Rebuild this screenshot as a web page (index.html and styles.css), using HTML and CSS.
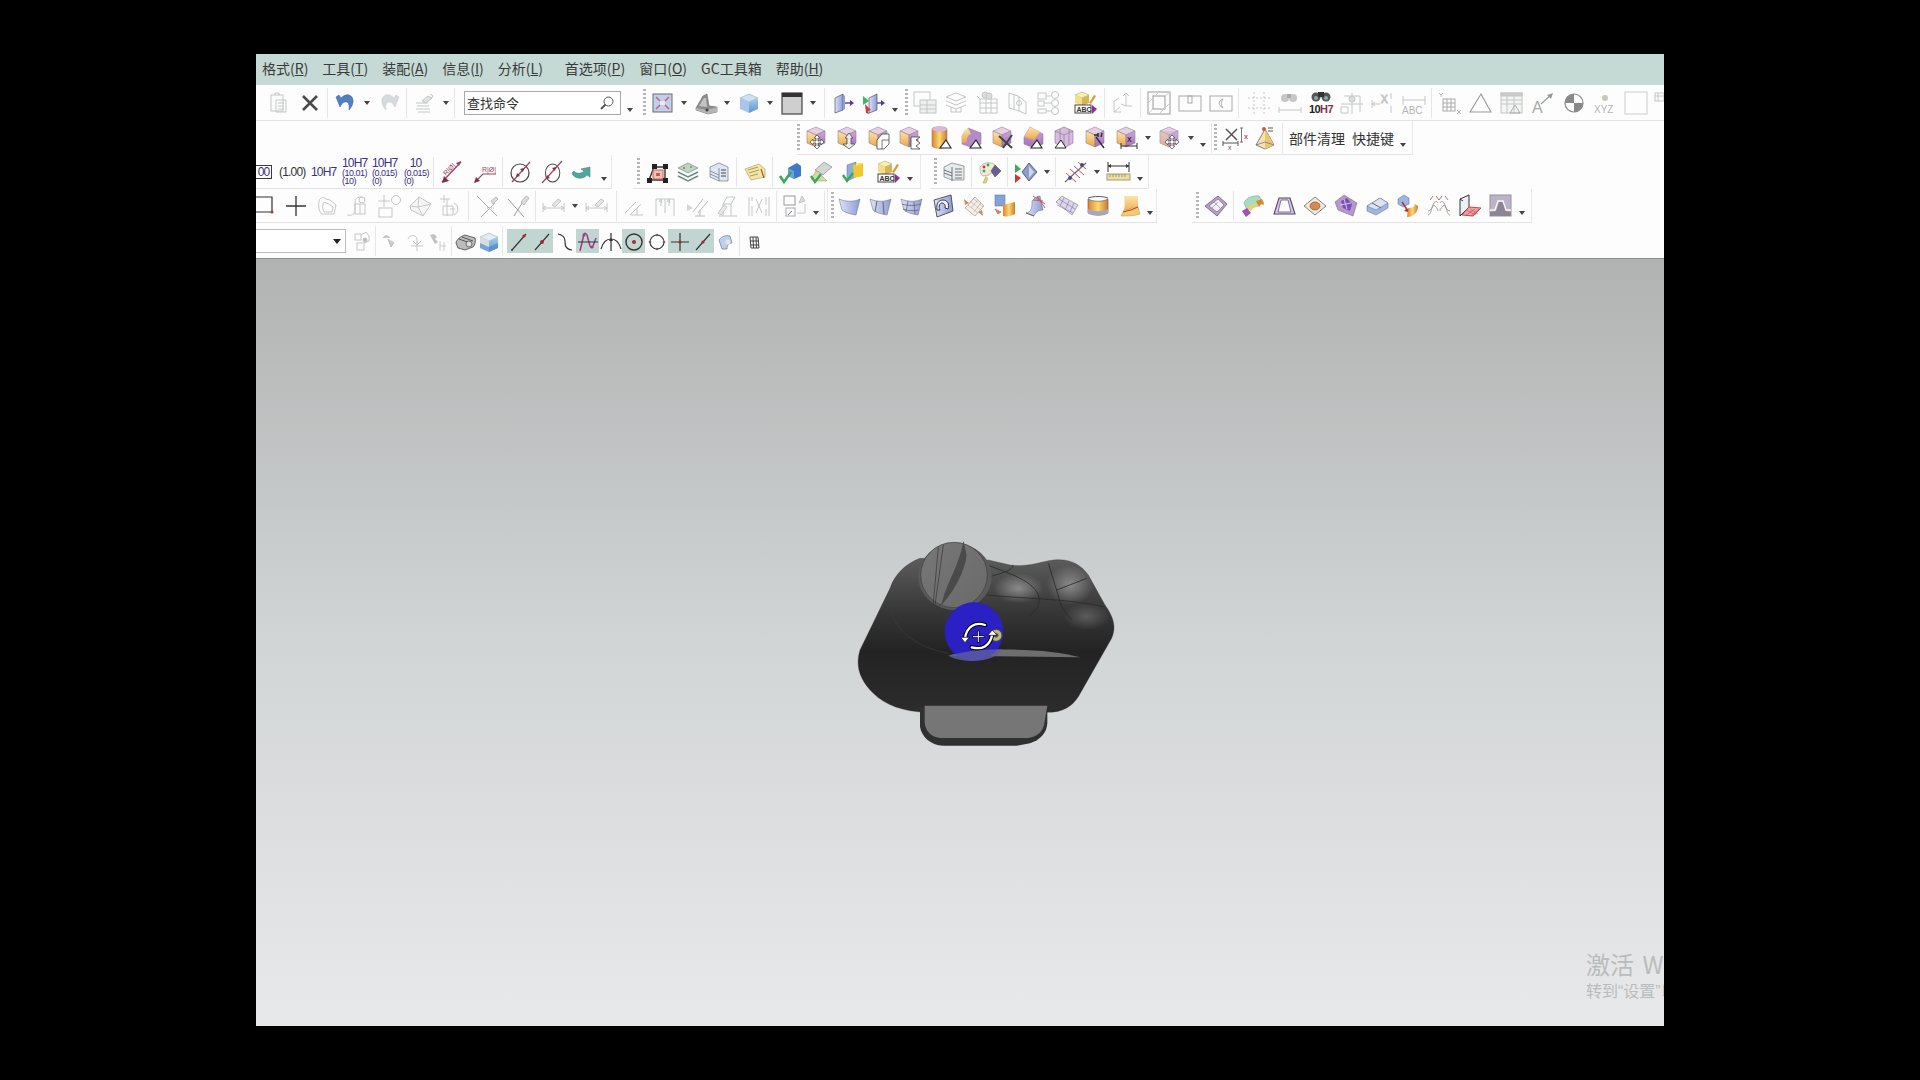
FILE: index.html
```html
<!doctype html>
<html lang="zh-CN">

<head>
	<title>NX</title>
	<meta charset="utf-8">
	<link rel="stylesheet" href="styles.css">
</head>

<body>
	<svg class="defs">
		<defs>
			<linearGradient id="org" x1="0" y1="0" x2="0" y2="1"><stop offset="0" stop-color="#fbe6a8"/><stop offset="1" stop-color="#eda548"/></linearGradient>
			<linearGradient id="pur" x1="0" y1="0" x2="0" y2="1"><stop offset="0" stop-color="#cfa8d8"/><stop offset="1" stop-color="#a070b8"/></linearGradient>
			<linearGradient id="blu" x1="0" y1="0" x2="1" y2="0"><stop offset="0" stop-color="#dde2f6"/><stop offset="1" stop-color="#8c9cd8"/></linearGradient>
			<linearGradient id="sky" x1="0" y1="0" x2="0" y2="1"><stop offset="0" stop-color="#a8cdea"/><stop offset="1" stop-color="#5e96d0"/></linearGradient>
			<linearGradient id="wrm" x1="0" y1="0" x2="1" y2="0"><stop offset="0" stop-color="#e0822a"/><stop offset=".5" stop-color="#fbd873"/><stop offset="1" stop-color="#c97a30"/></linearGradient>
			<linearGradient id="bg1" x1="0" y1="0" x2="0" y2="1"><stop offset="0" stop-color="#5c5c5c"/><stop offset=".35" stop-color="#363636"/><stop offset=".6" stop-color="#232323"/><stop offset="1" stop-color="#2c2c2c"/></linearGradient>
			<radialGradient id="hl"><stop offset="0" stop-color="#a6a6a6"/><stop offset="1" stop-color="#a6a6a6" stop-opacity="0"/></radialGradient>
			<linearGradient id="kn" x1="0" y1="0" x2="1" y2="1"><stop offset="0" stop-color="#777"/><stop offset="1" stop-color="#6a6a6a"/></linearGradient>

			<!-- row 1 -->
			<g id="paste" class="gy"><rect x="4" y="4" width="12" height="16"/><path d="M8 4V2h4v2M9 9h10v12H9zM11 12h6M11 15h6M11 18h6"/></g>
			<path id="cross" d="M5 5l14 14M19 5L5 19" fill="none" stroke="#4a4a4a" stroke-width="2.6"/>
			<path id="undo" d="M2 6l4 10 2.500-4c4.500-2.500 7.500-1 6.500 7 5-5 6-13 0-15-3-1-6 1-8 3L5 4z" fill="#4f80c4" stroke="#3b5f99" stroke-width=".5"/>
			<path id="redo" d="M22 6l-4 10-2.500-4c-4.500-2.500-7.500-1-6.500 7-5-5-6-13 0-15 3-1 6 1 8 3l2-3z" fill="#d5dada" stroke="#c4c8c8" stroke-width=".5"/>
			<g id="doc" class="gy"><path d="M3 12h12M4 15h12M3 18h14M5 21h12"/><path d="M9 10l6-5 4 2-6 5z" fill="#dfe3e3"/><path d="M17 3l3 2-2 3" stroke="#b8c8c0"/></g>
			<g id="fit"><rect x="2" y="3" width="19" height="18" fill="#c3cfe8" stroke="#6a6a78"/><path d="M5 6l4 4M18 6l-4 4M5 18l4-4M18 18l-4-4" stroke="#c25a7a" stroke-width="1.4"/><rect x="9" y="10" width="5" height="4" fill="#e4e9f5"/></g>
			<g id="shape"><path d="M2 17L9 5l4-2 2 12 8 1v5l-9 2-12-4z" fill="#8d8d8d" stroke="#666" stroke-width=".6"/><path d="M5 15l5-8 2 0 1 9z" fill="#c4c4c4"/><path d="M2 17l11 2 10-3v5l-9 2-12-4z" fill="#b5b5b5"/><circle cx="13" cy="19" r="1.500" fill="#444"/></g>
			<g id="cube"><path d="M12 3l9 4-9 4-9-4z" fill="#cfe0f2" stroke="#7f9cc0" stroke-width=".5"/><path d="M3 7l9 4v11l-9-4z" fill="#a9c6e8"/><path d="M21 7v11l-9 4V11z" fill="url(#sky)"/></g>
			<g id="square"><rect x="2" y="2" width="20" height="21" fill="#cfcfcf" stroke="#444" stroke-width="1.2"/><rect x="2" y="2" width="20" height="4" fill="#333"/></g>
			<g id="pan1"><path d="M4 7l8-4v16l-8 3z" fill="url(#blu)" stroke="#556" stroke-width=".7"/><path d="M12 3v16l2-1V5z" fill="#8d9ed8"/><path d="M14 12h6" stroke="#523a9c" stroke-width="1.4"/><path d="M19 9l4 3-4 3z" fill="#523a9c"/></g>
			<g id="pan2"><path d="M7 7l8-4v16l-8 3z" fill="url(#blu)" stroke="#556" stroke-width=".7"/><path d="M1 5l6 5-6 4z" fill="#42b560"/><path d="M3 13l6 6-3 1 1 3-3-1z" fill="#cc3a3a"/><path d="M15 12h5" stroke="#523a9c" stroke-width="1.4"/><path d="M19 9l4 3-4 3z" fill="#523a9c"/></g>
			<g id="gtab" class="gy"><rect x="1" y="1" width="16" height="14"/><rect x="7" y="9" width="16" height="13" fill="#eee"/><path d="M7 14h16M7 18h16M14 9v13"/></g>
			<g id="glay" class="gy"><path d="M12 2l10 4-10 4L2 6z"/><path d="M2 10l10 4 10-4M2 14l10 4 10-4"/><path d="M7 16v5h10v-5M12 18v3"/></g>
			<g id="ggrd" class="gy"><path d="M2 5l3 3h17v14H5V8M5 12h17M5 17h17M11 8v14M16 8v14"/><circle cx="10" cy="4" r="3" fill="#ddd"/><circle cx="14" cy="5" r="3" fill="#ddd"/></g>
			<g id="gfld" class="gy"><path d="M3 2l9 3 8 6v12l-7-3-10-3zM8 4v14M13 5v15"/><circle cx="13" cy="12" r="2.5"/></g>
			<g id="gtree"><g class="gy" stroke-width="1"><rect x="1" y="2" width="8" height="6"/><rect x="1" y="10" width="6" height="5"/><rect x="1" y="18" width="8" height="4"/><circle cx="18" cy="4" r="3.5"/><circle cx="18" cy="12" r="3.5"/><circle cx="18" cy="20" r="3.5"/><path d="M9 5h5M7 12h7M9 20h5"/></g></g>
			<g id="abc"><path d="M8 1l7 3-7 3-7-3z" fill="#fbf0a8" stroke="#998" stroke-width=".5"/><path d="M1 4l7 3v8l-7-3z" fill="#f2de88"/><path d="M15 4v8l-7 3V7z" fill="#d6b45a"/><path d="M15 12l5-8 2 1-5 8z" fill="#d89a3a"/><rect x="1" y="14" width="16" height="8" fill="#fff" stroke="#444"/><text x="2.5" y="21" class="tn">ABC</text><path d="M18 14l5 4-5 5z" fill="#8c2f96"/></g>
			<g id="gaxe" class="gy"><path d="M15 3v12h6M15 15l-5-2M3 21V10l5-3M3 21h7M3 21l6-5"/><path d="M12 5l3-3 3 3"/></g>
			<g id="ghat" class="gy"><rect x="1" y="1" width="22" height="22" stroke="#999"/><rect x="6" y="5" width="12" height="13" fill="#fbfbfb" stroke="#999"/><path d="M1 12L12 1M12 23L23 12M1 23l5-5M18 5l5-4" stroke="#ccc"/></g>
			<g id="grc1" class="gy"><rect x="1" y="5" width="22" height="15" stroke="#aaa"/><rect x="10" y="5" width="4" height="7" stroke="#aaa"/></g>
			<g id="grc2" class="gy"><rect x="1" y="5" width="22" height="15" stroke="#aaa"/><path d="M14 8c-5 2-5 6 0 9-2-3-2-6 0-9z" stroke="#aaa"/></g>
			<g id="gdot" class="gy" stroke-dasharray="2 2"><path d="M1 7h22M1 17h22M7 1v22M17 1v22"/></g>
			<g id="gbin"><circle cx="7" cy="7" r="4" fill="#c7c7c7"/><circle cx="15" cy="7" r="4" fill="#c7c7c7"/><rect x="9" y="3" width="4" height="4" fill="#aaa"/><path d="M1 16v6M23 16v6M1 19h22" class="gy"/></g>
			<g id="b10"><circle cx="7" cy="6" r="4.500" fill="#555"/><circle cx="17" cy="6" r="4.500" fill="#555"/><rect x="9" y="1" width="6" height="5" fill="#333"/><circle cx="7" cy="7" r="2" fill="#8aa"/><circle cx="17" cy="7" r="2" fill="#8aa"/><text x="0" y="22" class="t10">10</text><text x="11" y="22" class="t10 tr">H7</text></g>
			<g id="gpln" class="gy"><path d="M1 13h22M12 2v21M4 5h16v16M1 22h7v-6H1z"/><circle cx="12" cy="8" r="3" fill="#ddd"/></g>
			<g id="gxx" class="gy"><path d="M1 13h8M1 9v8M20 2v6M20 15v7"/><path d="M4 11l-3 2 3 2"/><text x="10" y="12" class="tg">X</text></g>
			<g id="gab" class="gy"><path d="M1 5v9M23 5v9M1 9h22"/><text x="0" y="23" class="tg" stroke="none">ABC</text></g>
			<g id="gyt" class="gy"><rect x="5" y="8" width="12" height="12" stroke="#aaa"/><path d="M5 12h12M5 16h12M9 8v12M13 8v12" stroke="#aaa"/><path d="M1 2l2 2 2-2M3 4v2M19 19l4 4M23 19l-4 4" stroke="#bbb"/></g>
			<path id="tri" d="M12 3l10 18H1z" fill="none" stroke="#9a9a9a" stroke-width="1.1"/>
			<g id="gtb2" class="gy"><rect x="1" y="2" width="21" height="20" fill="#f4f4f4"/><rect x="1" y="2" width="21" height="3" fill="#ccc"/><path d="M1 9h21M1 13h21M7 5v17M14 5v17"/><path d="M15 14l5 8H10z" stroke="#aaa"/></g>
			<g id="gaar"><text x="1" y="22" class="tg tl">A</text><path d="M10 13l10-9" stroke="#999" stroke-width="1.2"/><path d="M22 2l-6 2 4 4z" fill="#999"/></g>
			<g id="quad"><circle cx="12" cy="12" r="9" fill="#fff" stroke="#888" stroke-width="1.2"/><path d="M12 3a9 9 0 0 0-9 9h9zM12 12h9a9 9 0 0 1-9 9z" fill="#888"/></g>
			<g id="xyz"><circle cx="12" cy="7" r="3" fill="#c9c9b8"/><text x="1" y="22" class="tg">XYZ</text></g>
			<rect id="blank" x="1" y="1" width="22" height="22" fill="#fdfdfd" stroke="#ccc"/>
			<g id="gcut" class="gy"><rect x="0" y="2" width="9" height="8"/><path d="M0 5h9M3 2v8"/></g>

			<!-- row 2, the cube family -->
			<g id="cb"><path d="M11 1l9 4-9 4-9-4z" fill="#e7cfe4" stroke="#84708c" stroke-width=".5"/><path d="M2 5l9 4v12l-9-4z" fill="url(#org)" stroke="#84708c" stroke-width=".5"/><path d="M20 5v12l-9 4V9z" fill="url(#pur)" stroke="#84708c" stroke-width=".5"/></g>
			<path id="wmove" d="M15 9l3 3h-2v3h3v-2l3 3-3 3v-2h-3v3h2l-3 3-3-3h2v-3h-3v2l-3-3 3-3v2h3v-3h-2z" fill="#fff" stroke="#444" stroke-width=".7"/>
			<g id="c1"><use href="#cb"/><use href="#wmove" x="-3"/></g>
			<g id="c2"><use href="#cb"/><path d="M13 7l4 5h-2v6h4l-6 5-6-5h4v-6H9z" fill="#e9e9e9" stroke="#444" stroke-width=".7"/></g>
			<g id="c3"><use href="#cb"/><path d="M10 14l5-6h7v10l-5 5h-7z" fill="#fff" stroke="#444" stroke-width=".8"/><path d="M15 14v9M15 14h7" stroke="#444" stroke-width=".7"/></g>
			<g id="c4"><use href="#cb"/><path d="M13 11h9l-4 3 4 3-4 3 4 3h-9z" fill="#fff" stroke="#444" stroke-width=".8"/></g>
			<g id="ctri"><path d="M14 14l5 8H8z" fill="#fff" stroke="#222" stroke-width="1.1"/></g>
			<g id="c5"><path d="M3 3c0-3 15-3 15 0v17c0 3-15 3-15 0z" fill="url(#wrm)" stroke="#84708c" stroke-width=".5"/><ellipse cx="10.500" cy="3" rx="7.500" ry="2.500" fill="#d8b8dc"/><use href="#ctri" x="3"/></g>
			<g id="c6"><path d="M2 10l6-8 13 5v11l-8 4-11-4z" fill="#b58ac8" stroke="#84708c" stroke-width=".5"/><path d="M2 10c1-4 3-7 6-8l3 6c-3 1-5 4-4 8l-5 1z" fill="url(#org)"/><use href="#ctri" x="2"/></g>
			<g id="c7"><use href="#cb"/><path d="M8 10l13 12M21 9l-9 13" stroke="#444" stroke-width="2"/></g>
			<g id="c8"><path d="M8 1l13 7v10l-9 4-10-4v-7z" fill="url(#pur)" stroke="#84708c" stroke-width=".5"/><path d="M2 11l6-10 10 5-6 8z" fill="url(#org)"/><use href="#ctri" x="1"/></g>
			<g id="c9"><path d="M11 1l9 4v12l-9 5-9-5V5z" fill="#d7bbe0" stroke="#84708c" stroke-width=".6"/><path d="M2 5l9 4 9-4M11 9v13M7 3v16M16 3v16" stroke="#84708c" stroke-width=".6" fill="none"/><path d="M8 14l5 8H2z" fill="#fff" stroke="#222"/></g>
			<g id="c10"><use href="#cb"/><path d="M12 11l8 11M14 7v4M10 9h4M18 7l-1 4" stroke="#333" stroke-width="1.5"/></g>
			<g id="c11"><use href="#cb"/><path d="M6 20h16M6 17v6M22 17v6" stroke="#333"/><text x="12" y="16" class="tn">X</text></g>
			<g id="c12"><use href="#cb"/><path d="M11 5l9 0v12l-9 4-9-4V5z" fill="#cdb0d8" opacity=".5"/><use href="#wmove" x="-1"/></g>
			<g id="xi"><path d="M5 3l11 11M16 3L5 14" stroke="#555" stroke-width="1.500"/><path d="M19 2h3M20.500 2v14M19 16h3" stroke="#777"/><text x="23" y="13" class="tn ty">x</text><path d="M2 17h15M2 15v5M17 15v5" stroke="#555"/><text x="7" y="24" class="tp">x</text></g>
			<g id="pyr"><path d="M12 3l9 16-9 4-9-4z" fill="#f5e4a8" stroke="#6a5a90" stroke-width=".8"/><path d="M12 3v20l9-4z" fill="#e8c86a"/><path d="M3 19l9-3 9 3" stroke="#8a6ab0" stroke-width=".8" fill="none"/><circle cx="11" cy="3" r="2" fill="#cc5a3a"/><path d="M15 2h5M15 5h5" stroke="#555"/></g>

			<!-- row 3 -->
			<g id="dm1"><path d="M2 22L21 2" stroke="#a04060" stroke-width="1.2"/><path d="M2 23l2-7 5 5z" fill="#80304a"/><path d="M21 1l-5 2 3 3z" fill="#a04060"/><text class="tp" x="0" y="0" transform="translate(6 16) rotate(-45)">R|Ø|</text></g>
			<g id="dm2"><path d="M2 22l8-8h13" stroke="#a04060" stroke-width="1.2" fill="none"/><path d="M1 23l2-6 4 4z" fill="#80304a"/><text class="tp" x="9" y="12">R|Ø|</text></g>
			<g id="dm3"><circle cx="11" cy="13" r="9" fill="none" stroke="#444" stroke-width="1.2"/><path d="M3 22L21 2" stroke="#a04060" stroke-width="1.2"/><path d="M7 17l4-1-3-3zM15 8l-4 1 3 3z" fill="#80304a"/></g>
			<g id="dm4"><path d="M12 4c5 0 9 4 9 9s-4 9-9 9-9-4-9-9 4-9 9-9" fill="none" stroke="#444" stroke-width="1.2" transform="matrix(.8 0 0 1 3 0)"/><path d="M2 23L22 1" stroke="#a04060" stroke-width="1.2"/><path d="M6 19l4-1-3-3zM16 7l-4 1 3 3z" fill="#80304a"/></g>
			<path id="ret" d="M1 13c2 6 11 7 15 2l3 2V7l-9 2 3 2c-3 3-8 3-10 0z" fill="#4fa69a" stroke="#37807a" stroke-width=".5"/>
			<g id="node"><path d="M4 20L9 7h11v13z" fill="none" stroke="#333" stroke-width="1.4"/><rect x="8" y="10" width="10" height="9" fill="#f3c3b4" stroke="#c65a50"/><rect x="11" y="13" width="4" height="3" fill="#c65a50"/><rect x="7" y="4" width="5" height="5" fill="#222"/><rect x="18" y="4" width="5" height="5" fill="#222"/><rect x="2" y="18" width="5" height="5" fill="#222"/><rect x="18" y="18" width="5" height="5" fill="#222"/></g>
			<g id="stk"><path d="M12 3l10 5-10 5L2 8z" fill="#bcd6c4" stroke="#777" stroke-width=".6"/><path d="M2 12l10 5 10-5M2 16l10 5 10-5" fill="none" stroke="#6a8a80" stroke-width="1.4"/><circle cx="8" cy="8" r="1" fill="#c55"/><circle cx="15" cy="7" r="1" fill="#5a5"/></g>
			<g id="stk2"><path d="M3 7l9-4 9 4v14H12L3 17z" fill="#dfe8f2" stroke="#778" stroke-width=".7"/><path d="M3 11l9 4M3 14l9 4M12 8v13" stroke="#779" fill="none" stroke-width=".8"/><path d="M14 10h5M14 13h5M14 16h5" stroke="#445" stroke-width="1.2"/></g>
			<g id="tag"><path d="M2 9l14-5 6 5v8L8 20z" fill="#f2e6a6" stroke="#b8a060" stroke-width=".7"/><path d="M5 10l10-3M6 13l10-3M7 16l8-2" stroke="#b09a60"/><path d="M18 9l3 9" stroke="#a05a40" stroke-width="1.2"/></g>
			<g id="chk1"><path d="M9 8l9-5 4 3v10l-7 3-6-3z" fill="#3e78c8"/><path d="M9 8l6 3v8l-6-3z" fill="#6da0e0"/><path d="M1 16l4 6 7-10" fill="none" stroke="#3aa858" stroke-width="2.6"/></g>
			<g id="ham"><path d="M5 10l9-8 8 5-7 6-2 2-4-3z" fill="#d2d8d2" stroke="#666" stroke-width=".5"/><path d="M1 19l5-8 4 3 7 7H7z" fill="#d2d8a6" stroke="#9a9a50" stroke-width=".5"/><path d="M1 16l4 6 6-8" fill="none" stroke="#3aa858" stroke-width="2.4"/></g>
			<g id="chk2"><path d="M6 5l9-3v15l-9 4z" fill="#8cb0dc" stroke="#556" stroke-width=".4"/><path d="M12 5l10-2v13l-9 2z" fill="#f2c82e"/><path d="M15 3h7l-7 3z" fill="#fae37a"/><path d="M2 15l4 6 6-8" fill="none" stroke="#3aa858" stroke-width="2.4"/></g>
			<g id="stk3"><path d="M2 7l8-4 12 3v14H10L2 17z" fill="#e5ece9" stroke="#778" stroke-width=".7"/><path d="M2 10l8 3M2 13l8 3M10 7v14M13 9h7M13 12h7M13 15h7M13 18h7" stroke="#667" fill="none" stroke-width=".9"/></g>
			<g id="pal"><path d="M2 9c0-5 6-7 11-6s7 5 4 8c-2 3-5 1-6 4l-6 1C3 15 2 12 2 9z" fill="#f1ecc6" stroke="#999" stroke-width=".6"/><circle cx="6" cy="7" r="1.4" fill="#d26"/><circle cx="10" cy="5" r="1.400" fill="#2a7"/><circle cx="6" cy="11" r="1.400" fill="#39c"/><path d="M8 16l-3 7h3l2-5" fill="#e8cf6e" stroke="#998" stroke-width=".5"/><path d="M17 5l6 6-6 6-4-6z" fill="#6a5aa0" stroke="#444" stroke-width=".5"/></g>
			<g id="dia"><path d="M1 4l6 5-6 4z" fill="#42a860"/><path d="M1 14l6 4-6 5z" fill="#c83a3a"/><path d="M15 3l8 9-8 9-7-9z" fill="#8c9ccc" stroke="#445" stroke-width=".8"/><path d="M15 6l5 6-5 6z" fill="#d0d6ea"/></g>
			<g id="hatch"><path d="M1 22L22 3" stroke="#666" stroke-width="1.1"/><path d="M2 13l10 9M6 9l10 9M10 6l10 9M14 2l8 7" stroke="#c0565a" stroke-width="1"/><circle cx="18" cy="5" r="2" fill="#4a4a90"/><circle cx="6" cy="18" r="2" fill="#4a4a90"/></g>
			<g id="rule"><path d="M1 2v10M22 2v10M1 6h21" stroke="#333"/><path d="M4 4L1 6l3 2zM19 4l3 2-3 2z" fill="#333"/><rect x="0" y="14" width="23" height="6" fill="#e8dfa0" stroke="#a8a070"/><path d="M3 14v3M6 14v3M9 14v3M12 14v3M15 14v3M18 14v3" stroke="#888" stroke-width=".8"/></g>

			<!-- row 4, sketch tools -->
			<g id="rect"><path d="M-2 3h18v15H-2" fill="none" stroke="#333" stroke-width="1.2"/><circle cx="16" cy="18" r="1.500" fill="#b0303a"/></g>
			<path id="plus" d="M12 2v20M2 12h20" stroke="#333" stroke-width="1.300"/>
			<path id="sk1" class="gy" d="M4 8c0-4 4-6 7-3l4 1 6 5-2 9H7c-3-2-4-8-3-12zM8 10c1-2 2-2 3-1l3 1 4 3-1 5H9c-1-2-2-5-1-8z"/>
			<g id="sk2" class="gy"><path d="M1 21c5 1 8-1 8-4V8c0-4 3-5 7-5"/><rect x="9" y="10" width="10" height="10"/><path d="M14 10v10"/><circle cx="16" cy="6" r="3"/></g>
			<g id="sk3" class="gy"><path d="M7 1v12M1 7h12"/><circle cx="19" cy="6" r="4.500"/><rect x="2" y="14" width="13" height="9"/></g>
			<g id="sk4" class="gy"><path d="M2 12l9-9 12 7-8 12-12-6zM11 3l-1 10 5 9M2 12l8 1 13-3" fill="#f6f6f6"/></g>
			<g id="sk5" class="gy"><path d="M1 5h10M5 1v8M8 5v17M4 12h10v9H4zM15 9c5 2 5 10 0 12"/><path d="M11 15h5"/></g>
			<g id="sk6"><path d="M2 2l20 20M20 9L6 23" stroke="#aaa" fill="none"/><path d="M12 14h8" stroke="#bbb" stroke-dasharray="1 1"/><path d="M16 7l5-4 2 2-5 5z" fill="#ddd" stroke="#bbb"/></g>
			<g id="sk7"><path d="M2 5l16 18M20 3L8 22" stroke="#999" fill="none"/><path d="M15 8l5-6 3 2-5 7z" fill="#ddd" stroke="#bbb"/></g>
			<g id="sk8" class="gy"><path d="M1 9v9M22 9v9M1 14h21"/><path d="M10 11l6-6 3 2-6 6z" fill="#e4e4e4"/><path d="M4 12l-3 2 3 2M19 12l3 2-3 2"/></g>
			<g id="sk9" class="gy"><path d="M2 19L13 8M7 21L18 10M8 21h12M14 21v-7"/></g>
			<g id="sk10" class="gy"><path d="M2 22V5h18v17M7 5v7M15 5v7M8 9l-1-4 -2 3M16 9l-1-4-2 3M11 5v14"/></g>
			<g id="sk11"><path d="M2 10l6 4-6 3z" fill="#d6d6d6"/><path d="M8 18L18 5M13 19L23 7M10 22h10M15 22v-6" stroke="#bbb" fill="none"/></g>
			<g id="sk12" class="gy"><path d="M3 22h18M7 22V10h8v12M15 10l4-7M7 10l4-7h8"/><path d="M2 19l6-8 3 2-6 8z" fill="#e8e8e8"/></g>
			<g id="sk13" class="gy"><path d="M2 3v19M22 3v19M5 3v4M5 12v10M19 3v8M19 15v7M9 5l6 14M15 5L9 19"/></g>
			<g id="sk14" class="gy"><rect x="1" y="2" width="11" height="9" stroke="#999"/><rect x="3" y="14" width="9" height="8" stroke="#aaa"/><path d="M14 19h8v-9"/><path d="M19 2l3 5-6 2z" fill="#ddd"/><path d="M5 21l4-4" stroke="#77a"/></g>

			<g id="s1"><path d="M1 5c7 3 15 3 21 0l-4 16c-6-1-10-2-14-5z" fill="url(#blu)" stroke="#667" stroke-width=".5"/></g>
			<g id="s2"><use href="#s1"/><path d="M8 7l-2 11M14 8l1 12" stroke="#667"/></g>
			<g id="s3"><use href="#s1"/><path d="M8 7l-2 11M14 8l1 12M2 10c6 2 13 2 19 0M3 15c5 2 10 2 16 1" stroke="#667" fill="none" stroke-width=".8"/></g>
			<g id="s4"><path d="M3 6l17-5 2 16-16 6z" fill="url(#blu)" stroke="#445" stroke-width=".9"/><path d="M6 16c-1-7 2-10 6-10s7 4 5 9l-3-1c1-3-1-5-3-5s-4 3-2 7z" fill="#f4f4fb" stroke="#334"/></g>
			<g id="s5"><path d="M3 14L13 3l9 9-9 10z" fill="#f3eee8" stroke="#a88" stroke-width=".6"/><path d="M6 11l10 8M9 8l10 8M12 5l9 8M13 3l-7 8M16 6l-7 8M19 9l-7 9" stroke="#b99" stroke-width=".5"/><path d="M2 5l5 4-4 2zM21 22l-5-4 4-2z" fill="#d48a52"/></g>
			<g id="s6"><rect x="2" y="1" width="10" height="11" fill="#7ea6dc" stroke="#667" stroke-width=".5"/><path d="M10 11l12-3v12c-4 2-8 3-12 2z" fill="url(#wrm)"/><path d="M2 15l6 3-3 2zM10 9H7" fill="#c86" stroke="#c86"/></g>
			<g id="s7"><path d="M2 19c6-1 6-6 6-12 2-3 6-5 8-5l3 14c-5 0-8 3-9 6z" fill="url(#blu)" stroke="#667" stroke-width=".5"/><path d="M9 2l12 8M13 2l8 12M9 6l10 1" stroke="#c55a60"/><path d="M2 19l8 3" stroke="#667"/></g>
			<g id="s8"><path d="M1 8l6-6 16 9-6 10z" fill="#dcd6ee" stroke="#887" stroke-width=".6"/><path d="M4 5l16 10M2 11l16 8M9 4L5 12M14 7l-4 9M19 9l-4 9" stroke="#8c7cb0" stroke-width=".7"/></g>
			<g id="s9"><path d="M2 5c6 3 14 3 20 0v14c-6 3-14 3-20 0z" fill="url(#wrm)" stroke="#556" stroke-width=".6"/><path d="M2 15c6 3 14 3 20 0v4c-6 3-14 3-20 0z" fill="#a8a8bc"/><path d="M2 4c6-2 14-2 20 0" stroke="#556" fill="none"/></g>
			<g id="s10"><path d="M7 2h14v12c-2 0-4 1-6 3l-9 2c2-4 2-9 1-17z" fill="url(#org)"/><path d="M4 22l3-6c3 0 6-1 8-2 2 0 4 0 6-1l2 7c-6 2-13 2-19 2z" fill="#f0cc70" stroke="#b86" stroke-width=".5"/><path d="M6 18l8-2 7-3" stroke="#c43a3a" fill="none"/></g>

			<g id="t1"><path d="M1 12l13-10 9 8-10 12z" fill="#b8a0c4" stroke="#6a5a80" stroke-width=".8"/><path d="M5 12l9-7 6 6-7 7z" fill="#f4f2f6" stroke="#6a5a80" stroke-width=".6"/><path d="M10 8l6 6M14 8l-6 6" stroke="#8a7a9c" stroke-width=".6"/></g>
			<g id="t2"><path d="M3 9c2-5 9-8 15-7l5 7-8 3c-5 0-8 1-9 4z" fill="#a8dcc0" stroke="#6a9a80" stroke-width=".5"/><path d="M6 15c0-3 4-5 9-5l3 3c-5 0-7 2-8 4z" fill="#e0d47a"/><path d="M1 17l5-3 4 5-5 4z" fill="#a050b0"/><path d="M15 7l6-2 2 6-3-1-2 3z" fill="#d8882a"/></g>
			<g id="t3"><path d="M7 4h11l5 16H2z" fill="#d4c8e6" stroke="#55456a" stroke-width="1.1"/><path d="M9 6l-3 12h13l-3-12z" fill="#fbfbfd" stroke="#55456a" stroke-width=".7"/></g>
			<g id="t4"><path d="M1 12l11-9 11 9-11 9z" fill="#f0ecdc" stroke="#666" stroke-width=".8"/><ellipse cx="12" cy="12" rx="5" ry="4" fill="#d88a4a" stroke="#74405a" stroke-width=".6"/></g>
			<g id="t5"><path d="M1 8l9-7 13 8-4 13-15-6z" fill="#b898cc" stroke="#665" stroke-width=".5"/><path d="M7 7l6-3 5 6-2 7-7-3z" fill="#7a50b8"/><path d="M10 5l3 10M6 11l11-2" stroke="#d8c8ec"/></g>
			<g id="t6"><path d="M2 12l13-8 8 5v5l-12 7-9-4z" fill="#9cb8e6" stroke="#667" stroke-width=".5"/><path d="M2 12l9 4 12-7-8-5z" fill="#dde2f4" stroke="#667" stroke-width=".5"/><path d="M7 9l9 5" stroke="#667"/></g>
			<g id="t7"><path d="M2 5l6-4 5 3v6l-6 3-5-3z" fill="#9cb4e6" stroke="#667" stroke-width=".5"/><path d="M12 14c5 0 6-1 7-4l3 2c0 6-4 11-11 11z" fill="url(#wrm)"/><path d="M6 8l6 9" stroke="#b83030" stroke-width="1.5"/><path d="M12 18l-4-1 3-3z" fill="#b83030"/></g>
			<g id="t8"><path d="M1 21c3 0 3-7 6-12 1-2 3-2 4 0M13 9c1-2 3-2 4 0 3 5 3 12 6 12M1 17c3 0 4-4 6-6 2 3 4 3 4 6M13 17c0-3 2-3 4-6 2 2 3 6 6 6" fill="none" stroke="#9a8a78" stroke-width=".8"/><path d="M6 2l-3 4M9 2l3 4M15 2l-3 4M18 2l3 4" stroke="#b34a4a" stroke-width=".8"/></g>
			<g id="t9"><path d="M2 5l9-4v12l-9 9z" fill="#eef0f8" stroke="#333" stroke-width="1"/><path d="M11 13l12 1-8 8-11-1z" fill="#eaa4aa" stroke="#c44"/><path d="M8 16l10 5M12 15l8 5M17 15l-9 6M21 15l-8 7" stroke="#c44" stroke-width=".6"/><path d="M2 5l3 2" stroke="#333"/></g>
			<g id="t10"><rect x="1" y="1" width="21" height="21" fill="#bdb2c6" stroke="#99909e"/><path d="M1 18l6-1 3-9h4l3 9 5 1v4H1z" fill="#8d8496"/><path d="M1 16h5l3-9h5l3 9h5" fill="none" stroke="#f6f6f8" stroke-width="1.400"/></g>

			<!-- row 5 -->
			<g id="q1" class="gy"><rect x="5" y="4" width="6" height="6"/><path d="M11 5l5-3 3 4v5l-5 2"/><rect x="7" y="13" width="7" height="7"/><circle cx="15" cy="10" r="2" fill="#bbb"/></g>
			<g id="q2"><path d="M3 8c2-3 5-3 7 0" stroke="#bbb" fill="#ccc"/><path d="M8 9l3 8 3-5" fill="#c8d0c8" stroke="#bbb"/></g>
			<path id="q3" class="gy" d="M5 9c1-4 8-5 9 0v4M10 11l4 4 4-4M14 12v9M8 16h12"/>
			<g id="q4"><path d="M4 5l4-1 3 3-2 2 3 3-3 2z" fill="#c0c0c0"/><path d="M14 11v10M18 12v9M14 16h6" stroke="#ccc"/></g>
			<g id="sol"><path d="M2 13c0-3 5-7 9-8l10 3c1 3 0 7-2 9l-8 3-7-2z" fill="#bcbcbc" stroke="#444" stroke-width=".8"/><path d="M5 9l11 4M8 7l11 4" stroke="#555"/><circle cx="15" cy="14" r="3" fill="#ddd" stroke="#444" stroke-width=".7"/></g>
			<g id="cub2"><path d="M12 3l9 4-9 4-9-4z" fill="#e4ecf4" stroke="#8aa" stroke-width=".5"/><path d="M3 7l9 4v11l-9-4z" fill="#d8dde0"/><path d="M21 7v11l-9 4V11z" fill="url(#sky)"/><path d="M3 13l9 4 9-4v5l-9 4-9-4z" fill="#4e8ccc" opacity=".7"/></g>
			<g id="d1"><path d="M5 20L19 4" stroke="#333" stroke-width="1.200"/><circle cx="17" cy="6" r="1.600" fill="#a82a3a"/><circle cx="5" cy="20" r="1" fill="#333"/></g>
			<g id="d2"><path d="M5 20L19 4" stroke="#333" stroke-width="1.200"/><circle cx="12" cy="12" r="2" fill="#a82a3a"/></g>
			<path id="d3" d="M5 4c5 1 7 3 7 7s0 8 7 9" fill="none" stroke="#333" stroke-width="1.200"/>
			<g id="d4"><path d="M4 21L8 4c1-1 2-1 3 1l3 11c1 2 2 2 3 0l3-8" fill="none" stroke="#a03a88" stroke-width="1.500"/><circle cx="8" cy="5" r="1.600" fill="#a03a88"/><circle cx="16" cy="17" r="1.600" fill="#a03a88"/><path d="M2 12h20" stroke="#333" stroke-width="1"/></g>
			<g id="d5"><path d="M2 19C4 12 8 9 12 9s8 3 10 10M12 3v18" fill="none" stroke="#333" stroke-width="1.200"/><path d="M12 8l-2 3h4z" fill="#333"/></g>
			<g id="d6"><circle cx="12" cy="12" r="8" fill="none" stroke="#333" stroke-width="1.400"/><circle cx="12" cy="12" r="2" fill="#a82a3a"/></g>
			<g id="d7"><circle cx="12" cy="12" r="7" fill="none" stroke="#333" stroke-width="1.100"/><circle cx="12" cy="5" r="1.300" fill="#666"/><circle cx="12" cy="19" r="1.300" fill="#666"/><circle cx="5" cy="12" r="1.300" fill="#666"/><circle cx="19" cy="12" r="1.300" fill="#666"/></g>
			<g id="d8"><path d="M12 3v18M3 12h18" stroke="#333" stroke-width="1.200"/><circle cx="12" cy="12" r="1.500" fill="#a82a3a"/></g>
			<g id="d9"><path d="M5 20L19 4" stroke="#333" stroke-width="1.200"/><circle cx="12" cy="12" r="1.600" fill="#a82a3a"/></g>
			<g id="d10"><path d="M5 10c3-4 7-5 11-4l2 7c-3 0-5 2-5 6H8z" fill="#bcd0ea" stroke="#667" stroke-width=".6"/><circle cx="14" cy="12" r="2.500" fill="#dce4ef"/></g>
			<g id="d11"><path d="M8 7h8l1 11H9zM8 11h9M8 15h9M11 7l.5 11M14 7l.5 11" fill="none" stroke="#444" stroke-width="1"/></g>
		</defs>
	</svg>

	<div class="win">
		<div class="menu">
			<span class="mi">格式(<u>R</u>)</span>
			<span class="mi">工具(<u>T</u>)</span>
			<span class="mi">装配(<u>A</u>)</span>
			<span class="mi">信息(<u>I</u>)</span>
			<span class="mi">分析(<u>L</u>)</span>
			<span class="mi wide">首选项(<u>P</u>)</span>
			<span class="mi">窗口(<u>O</u>)</span>
			<span class="mi">GC工具箱</span>
			<span class="mi">帮助(<u>H</u>)</span>
		</div>

		<div class="tb r1">
			<i class="w7"></i>
			<svg class="c"><use href="#paste"/></svg><svg class="c"><use href="#cross"/></svg><i class="sep"></i>
			<svg class="c"><use href="#undo"/></svg><i class="dd"></i><svg class="c"><use href="#redo"/></svg><i class="sep"></i>
			<svg class="c"><use href="#doc"/></svg><i class="dd"></i><i class="sep"></i><i class="w7"></i>
			<div class="search"><span>查找命令</span><svg class="mag" width="14" height="14"><circle cx="8.500" cy="5.500" r="4.500" fill="#fff" stroke="#555"/><path d="M5.500 8.500L1 13" stroke="#555" stroke-width="2"/></svg></div>
			<i class="w3"></i><i class="dd low"></i><i class="w3"></i><i class="grip"></i>
			<svg class="c"><use href="#fit"/></svg><i class="dd"></i><svg class="c"><use href="#shape"/></svg><i class="dd"></i><svg class="c"><use href="#cube"/></svg><i class="dd"></i><svg class="c"><use href="#square"/></svg><i class="dd"></i><i class="w3"></i><i class="sep"></i>
			<svg class="c"><use href="#pan1"/></svg><svg class="c"><use href="#pan2"/></svg><i class="dd low"></i><i class="grip"></i>
			<svg class="c"><use href="#gtab"/></svg><svg class="c"><use href="#glay"/></svg><svg class="c"><use href="#ggrd"/></svg><svg class="c"><use href="#gfld"/></svg><svg class="c"><use href="#gtree"/></svg><i class="w6"></i><svg class="c"><use href="#abc"/></svg><i class="w1"></i><i class="sep"></i>
			<svg class="c"><use href="#gaxe"/></svg><i class="sep"></i>
			<svg class="c"><use href="#ghat"/></svg><svg class="c"><use href="#grc1"/></svg><svg class="c"><use href="#grc2"/></svg><i class="sep"></i><i class="w2"></i>
			<svg class="c"><use href="#gdot"/></svg><svg class="c"><use href="#gbin"/></svg><svg class="c"><use href="#b10"/></svg><svg class="c"><use href="#gpln"/></svg><svg class="c"><use href="#gxx"/></svg><svg class="c"><use href="#gab"/></svg><i class="sep"></i>
			<svg class="c"><use href="#gyt"/></svg><svg class="c"><use href="#tri"/></svg><svg class="c"><use href="#gtb2"/></svg><svg class="c"><use href="#gaar"/></svg><svg class="c"><use href="#quad"/></svg><svg class="c"><use href="#xyz"/></svg><svg class="c"><use href="#blank"/></svg><svg class="c"><use href="#gcut"/></svg>
		</div>

		<div class="tb r2">
			<div class="grp">
				<i class="grip flush"></i><i class="w1"></i>
				<svg class="c"><use href="#c1"/></svg><svg class="c"><use href="#c2"/></svg><svg class="c"><use href="#c3"/></svg><svg class="c"><use href="#c4"/></svg><svg class="c"><use href="#c5"/></svg><svg class="c"><use href="#c6"/></svg><svg class="c"><use href="#c7"/></svg><svg class="c"><use href="#c8"/></svg><svg class="c"><use href="#c9"/></svg><svg class="c"><use href="#c10"/></svg><svg class="c"><use href="#c11"/></svg><i class="dd"></i><svg class="c"><use href="#c12"/></svg><i class="dd"></i><i class="dd low"></i><i class="sep"></i><i class="grip flush"></i>
				<svg class="c"><use href="#xi"/></svg><i class="w1"></i><svg class="c"><use href="#pyr"/></svg><i class="sep"></i><i class="w4"></i>
				<span class="lbl">部件清理</span><span class="lbl sec">快捷键</span><i class="w3"></i><i class="dd low"></i><i class="w3"></i>
			</div>
		</div>

		<div class="tb r3">
			<div class="grp">
				<span class="dim boxed">00</span><i class="w7"></i>
				<span class="dim w24">(1.00)</span><i class="w8"></i>
				<span class="dim w22 navy">10H7</span><i class="w9"></i>
				<span class="stack w24"><b>10H7</b><small>(10.01)<br>(10)</small></span><i class="w6"></i>
				<span class="stack w24"><b>10H7</b><small>(0.015)<br>(0)</small></span><i class="w8"></i>
				<span class="stack w23"><b>10</b><small>(0.015)<br>(0)</small></span><i class="w4"></i><i class="sep"></i>
				<svg class="c"><use href="#dm1"/></svg><i class="w2"></i><svg class="c"><use href="#dm2"/></svg><i class="sep"></i>
				<svg class="c"><use href="#dm3"/></svg><svg class="c"><use href="#dm4"/></svg><svg class="c"><use href="#ret"/></svg><i class="dd low"></i><i class="w1"></i>
			</div>
			<div class="grp g21">
				<i class="grip"></i><svg class="c"><use href="#node"/></svg><svg class="c"><use href="#stk"/></svg><svg class="c"><use href="#stk2"/></svg><i class="sep"></i>
				<svg class="c"><use href="#tag"/></svg><i class="sep"></i>
				<svg class="c"><use href="#chk1"/></svg><svg class="c"><use href="#ham"/></svg><svg class="c"><use href="#chk2"/></svg><i class="w5"></i><svg class="c"><use href="#abc"/></svg><i class="dd low"></i><i class="w4"></i>
			</div>
			<div class="grp g9">
				<i class="grip"></i><svg class="c"><use href="#stk3"/></svg><i class="sep"></i>
				<svg class="c"><use href="#pal"/></svg><i class="sep"></i>
				<svg class="c"><use href="#dia"/></svg><i class="dd"></i><i class="sep"></i><i class="w2"></i>
				<svg class="c"><use href="#hatch"/></svg><i class="dd"></i><svg class="c"><use href="#rule"/></svg><i class="dd low"></i><i class="w2"></i>
			</div>
		</div>

		<div class="tb r4">
			<div class="grp">
				<svg class="c cut"><use href="#rect"/></svg><i class="w6"></i>
				<svg class="c"><use href="#plus"/></svg><svg class="c"><use href="#sk1"/></svg><svg class="c"><use href="#sk2"/></svg><svg class="c"><use href="#sk3"/></svg><svg class="c"><use href="#sk4"/></svg><svg class="c"><use href="#sk5"/></svg><i class="sep"></i>
				<svg class="c"><use href="#sk6"/></svg><svg class="c"><use href="#sk7"/></svg><i class="sep"></i>
				<svg class="c"><use href="#sk8"/></svg><i class="dd"></i><svg class="c"><use href="#sk8"/></svg><i class="w2"></i><i class="sep"></i>
				<svg class="c"><use href="#sk9"/></svg><svg class="c"><use href="#sk10"/></svg><svg class="c"><use href="#sk11"/></svg><svg class="c"><use href="#sk12"/></svg><svg class="c"><use href="#sk13"/></svg><i class="sep"></i>
				<svg class="c"><use href="#sk14"/></svg><i class="dd low"></i><i class="sep"></i>
			</div>
			<div class="grp">
				<i class="grip tight"></i><svg class="c"><use href="#s1"/></svg><svg class="c"><use href="#s2"/></svg><svg class="c"><use href="#s3"/></svg><svg class="c"><use href="#s4"/></svg><svg class="c"><use href="#s5"/></svg><svg class="c"><use href="#s6"/></svg><svg class="c"><use href="#s7"/></svg><svg class="c"><use href="#s8"/></svg><svg class="c"><use href="#s9"/></svg><svg class="c"><use href="#s10"/></svg><i class="dd low"></i>
			</div>
			<div class="grp g35">
				<i class="grip"></i><svg class="c"><use href="#t1"/></svg><i class="sep"></i><i class="w1"></i>
				<svg class="c"><use href="#t2"/></svg><svg class="c"><use href="#t3"/></svg><svg class="c"><use href="#t4"/></svg><svg class="c"><use href="#t5"/></svg><svg class="c"><use href="#t6"/></svg><svg class="c"><use href="#t7"/></svg><svg class="c"><use href="#t8"/></svg><svg class="c"><use href="#t9"/></svg><svg class="c"><use href="#t10"/></svg><i class="dd low"></i><i class="w3"></i>
			</div>
		</div>

		<div class="tb r5">
			<div class="combo"><i class="dd dark"></i></div><i class="w4"></i>
			<svg class="c n"><use href="#q1"/></svg><i class="sep"></i><i class="w2"></i>
			<svg class="c n"><use href="#q2"/></svg><svg class="c n"><use href="#q3"/></svg><svg class="c n"><use href="#q4"/></svg><i class="sep"></i>
			<svg class="c n"><use href="#sol"/></svg><svg class="c n"><use href="#cub2"/></svg><i class="sep"></i><i class="w2"></i>
			<svg class="c n on"><use href="#d1"/></svg><svg class="c n on"><use href="#d2"/></svg><svg class="c n"><use href="#d3"/></svg><svg class="c n on"><use href="#d4"/></svg><svg class="c n"><use href="#d5"/></svg><svg class="c n on"><use href="#d6"/></svg><svg class="c n"><use href="#d7"/></svg><svg class="c n on"><use href="#d8"/></svg><svg class="c n on"><use href="#d9"/></svg><svg class="c n"><use href="#d10"/></svg><i class="sep"></i>
			<svg class="c n"><use href="#d11"/></svg>
		</div>

		<div class="view">
			<svg class="model" viewBox="0 0 960 780">
				<path d="M270 145C230 160 195 190 180 235L90 420C75 470 90 510 130 550C165 585 220 605 290 607H650C700 607 725 590 745 560L845 385C860 350 850 320 825 285L775 195C750 160 715 145 670 150C620 158 590 172 540 165L475 150z" fill="url(#bg1)" stroke="#333"/>
				<ellipse cx="565" cy="235" rx="75" ry="45" fill="url(#hl)" opacity=".7"/>
				<ellipse cx="720" cy="225" rx="70" ry="60" fill="url(#hl)" opacity=".7"/>
				<ellipse cx="770" cy="320" rx="70" ry="40" fill="url(#hl)" opacity=".35"/>
				<path d="M475 165c40 20 130 40 150 90c10 30-10 50-30 65M550 165c-5 20-40 25-70 35M655 160l40 130M470 255c90 10 240 10 350 35M680 240l90-35M695 290l30 40" fill="none" stroke="#2a2a2a" stroke-width="2.500"/>
				<path d="M355 437C450 412 650 412 750 442z" fill="#6e6e6e"/>
				<path d="M185 300c5 50 60 110 170 130" fill="none" stroke="#3d3d3d" stroke-width="2"/>
				<ellipse cx="375" cy="200" rx="110" ry="100" fill="#5a5a5a"/>
				<ellipse cx="372" cy="195" rx="100" ry="98" fill="url(#kn)" stroke="#3c3c3c" stroke-width="2"/>
				<path d="M340 105l-25 180M325 110l-15 170M400 95c10 60-20 150-80 200" fill="none" stroke="#333" stroke-width="2"/>
				<path d="M400 95l10 40c-5 50-40 110-75 150c10-60 50-110 65-190z" fill="#4a4a4a"/>
				<circle cx="432" cy="365" r="88" fill="#2a20c4"/>
				<path d="M355 437C420 420 480 418 518 418C505 440 470 452 432 453C400 453 375 448 355 437z" fill="#5f5fa0" opacity=".8"/>
				<circle cx="498" cy="376" r="18" fill="#b9b97a" stroke="#444" stroke-width="3"/>
				<circle cx="498" cy="376" r="7" fill="#555"/>
				<g fill="none" stroke-linecap="round">
					<path d="M465 345C435 335 410 350 405 385M425 412C455 420 480 410 487 372" stroke="#000" stroke-width="13"/>
					<path d="M465 345C435 335 410 350 405 385M425 412C455 420 480 410 487 372" stroke="#fff" stroke-width="7"/>
				</g>
				<path d="M392 382h26l-13 16zM473 376h28l-14-16z" fill="#fff" stroke="#000" stroke-width="2"/>
				<path d="M445 362v36M427 380h36" stroke="#000" stroke-width="7"/>
				<path d="M445 364v32M429 380h32" stroke="#fff" stroke-width="3"/>
				<path d="M270 590H652V640C650 670 630 690 600 700L560 707H340C300 705 275 680 270 650z" fill="#303030"/>
				<path d="M284 587H652L642 645C636 668 620 680 595 684H330C300 680 285 660 284 635z" fill="#767676"/>
			</svg>
			<div class="wm">
				<p class="wm1">激活 Windows</p>
				<p class="wm2">转到“设置”以激活 Windows。</p>
			</div>
		</div>
	</div>
</body>

</html>
```

FILE: styles.css
```css
html
{
	margin: 0;
	padding: 0;
}

body
{
	margin: 0;
	padding: 54px 0 0 256px;
	height: 1080px;
	box-sizing: border-box;
	background: #000;
	overflow: hidden;
	font-family: "Noto Sans CJK SC", "Noto Sans", sans-serif;
}

.defs
{
	position: absolute;
	width: 0;
	height: 0;
}

.win
{
	width: 1408px;
	height: 972px;
	display: flex;
	flex-direction: column;
	overflow: hidden;
	background: #fdfdfd;
}

/* menu */
.menu
{
	height: 31px;
	box-sizing: border-box;
	flex: none;
	display: flex;
	align-items: center;
	gap: 14px;
	padding: 0 0 3px 6px;
	background: #c5d9d5;
	color: #3a3a3a;
	font-size: 14px;
}

.mi.wide
{
	margin-left: 8px;
}

/* toolbars */
.tb
{
	flex: none;
	display: flex;
	align-items: stretch;
	height: 34px;
}

.r1
{
	height: 35px;
	align-items: center;
	border-bottom: 1px solid #e3e3e3;
}

.r2
{
	padding-left: 541px;
}

.r5
{
	height: 35px;
	align-items: center;
}

.grp
{
	display: flex;
	align-items: center;
	border-bottom: 1px solid #e3e3e3;
	border-right: 1px solid #e9e9e9;
	box-sizing: border-box;
}

.g21
{
	margin-left: 21px;
}

.g9
{
	margin-left: 9px;
}

.g35
{
	margin-left: 35px;
}

.c
{
	flex: none;
	width: 24px;
	height: 24px;
	margin: 0 3.5px;
	overflow: visible;
}

.c.n
{
	width: 23px;
	height: 22px;
	margin: 0;
	padding: 1px 0;
	box-sizing: content-box;
}

.c.cut
{
	width: 18px;
	margin: 0;
}

.on
{
	background: #c2d6d1;
}

.gy
{
	fill: none;
	stroke: #c4c6c6;
	stroke-width: 1;
}

.gy text
{
	fill: #b4b6b6;
}

.tn
{
	font: bold 7px "Liberation Sans", sans-serif;
	fill: #333;
}

.tn.ty
{
	fill: #b05a6a;
}

.tp
{
	font: 7px "Liberation Sans", sans-serif;
	fill: #a04060;
}

.t10
{
	font: bold 11px "Liberation Sans", sans-serif;
	letter-spacing: -0.5px;
	fill: #222;
}

.t10.tr
{
	fill: #8a2f4a;
}

.tg
{
	font: 10px "Liberation Sans", sans-serif;
	fill: #b4b6b6;
}

.tg.tl
{
	font-size: 16px;
	fill: #a8a8a8;
}

.sep
{
	flex: none;
	width: 1px;
	height: 30px;
	margin: 0 2px;
	background: #e6e6e6;
}

.grip
{
	flex: none;
	width: 3px;
	height: 28px;
	margin: 0 1px 0 4px;
	background: repeating-linear-gradient(#b5b5b5 0 2px, transparent 2px 4px);
}

.grip.flush
{
	margin: 0;
}

.grip.tight
{
	margin: 0 0 0 3px;
}

.dd
{
	flex: none;
	width: 12px;
	height: 3px;
	position: relative;
}

.dd::after
{
	content: "";
	position: absolute;
	left: 3px;
	top: 0;
	border: 3px solid transparent;
	border-top: 4px solid #444;
	border-bottom: 0;
}

.dd.low
{
	margin-top: 14px;
}

.dd.dark::after
{
	border-width: 5px 4px 0;
	border-top-color: #222;
}

.w1 { flex: none; width: 1px; }
.w2 { flex: none; width: 2px; }
.w3 { flex: none; width: 3px; }
.w4 { flex: none; width: 4px; }
.w5 { flex: none; width: 5px; }
.w6 { flex: none; width: 6px; }
.w7 { flex: none; width: 7px; }
.w8 { flex: none; width: 8px; }
.w9 { flex: none; width: 9px; }
.w22 { flex: none; width: 22px; }
.w23 { flex: none; width: 23px; }
.w24 { flex: none; width: 24px; }

.search
{
	flex: none;
	width: 157px;
	height: 24px;
	box-sizing: border-box;
	display: flex;
	align-items: center;
	justify-content: space-between;
	padding: 0 6px 0 2px;
	border: 1px solid #a9a9a9;
	background: #fff;
	color: #333;
	font-size: 13px;
}

.lbl
{
	font-size: 14px;
	color: #333;
}

.lbl.sec
{
	margin-left: 7px;
}

.dim
{
	font: 12px "Liberation Sans", sans-serif;
	letter-spacing: -0.8px;
	color: #333;
	text-align: center;
}

.dim.navy
{
	color: #3a2f80;
}

.dim.boxed
{
	width: 16px;
	flex: none;
	height: 14px;
	line-height: 13px;
	border: 1px solid #3a3a3a;
	border-left: none;
	box-sizing: border-box;
	font-size: 12px;
	color: #3a2f80;
}

.stack
{
	font: 9px/8px "Liberation Sans", sans-serif;
	letter-spacing: -0.3px;
	color: #3a2f80;
	text-align: center;
}

.stack b
{
	display: block;
	font-size: 12px;
	font-weight: normal;
	line-height: 11px;
	letter-spacing: -0.8px;
}

.stack small
{
	display: block;
	font-size: 9px;
	line-height: 8px;
	letter-spacing: -0.5px;
	text-align: left;
}

.combo
{
	flex: none;
	width: 90px;
	height: 24px;
	box-sizing: border-box;
	display: flex;
	align-items: center;
	justify-content: flex-end;
	padding-right: 3px;
	border: 1px solid #bdbdbd;
	border-left: none;
	background: #fff;
}

/* graphics window */
.view
{
	flex: 1;
	position: relative;
	overflow: hidden;
	border-top: 1px solid #8f8f8f;
	background: linear-gradient(#b1b3b3, #d2d5d5 50%, #e8e9ea);
}

.model
{
	position: absolute;
	left: 574px;
	top: 251px;
	width: 320px;
	height: 260px;
}

.wm
{
	position: absolute;
	left: 1330px;
	top: 689px;
	width: 400px;
	color: #b9bcbe;
}

.wm1,
.wm2
{
	margin: 0;
	white-space: nowrap;
}

.wm1
{
	font-size: 24px;
	line-height: 32px;
	word-spacing: 3px;
}

.wm2
{
	font-family: "Liberation Sans", "Noto Sans CJK SC", sans-serif;
	font-size: 16px;
	line-height: 24px;
}
```
